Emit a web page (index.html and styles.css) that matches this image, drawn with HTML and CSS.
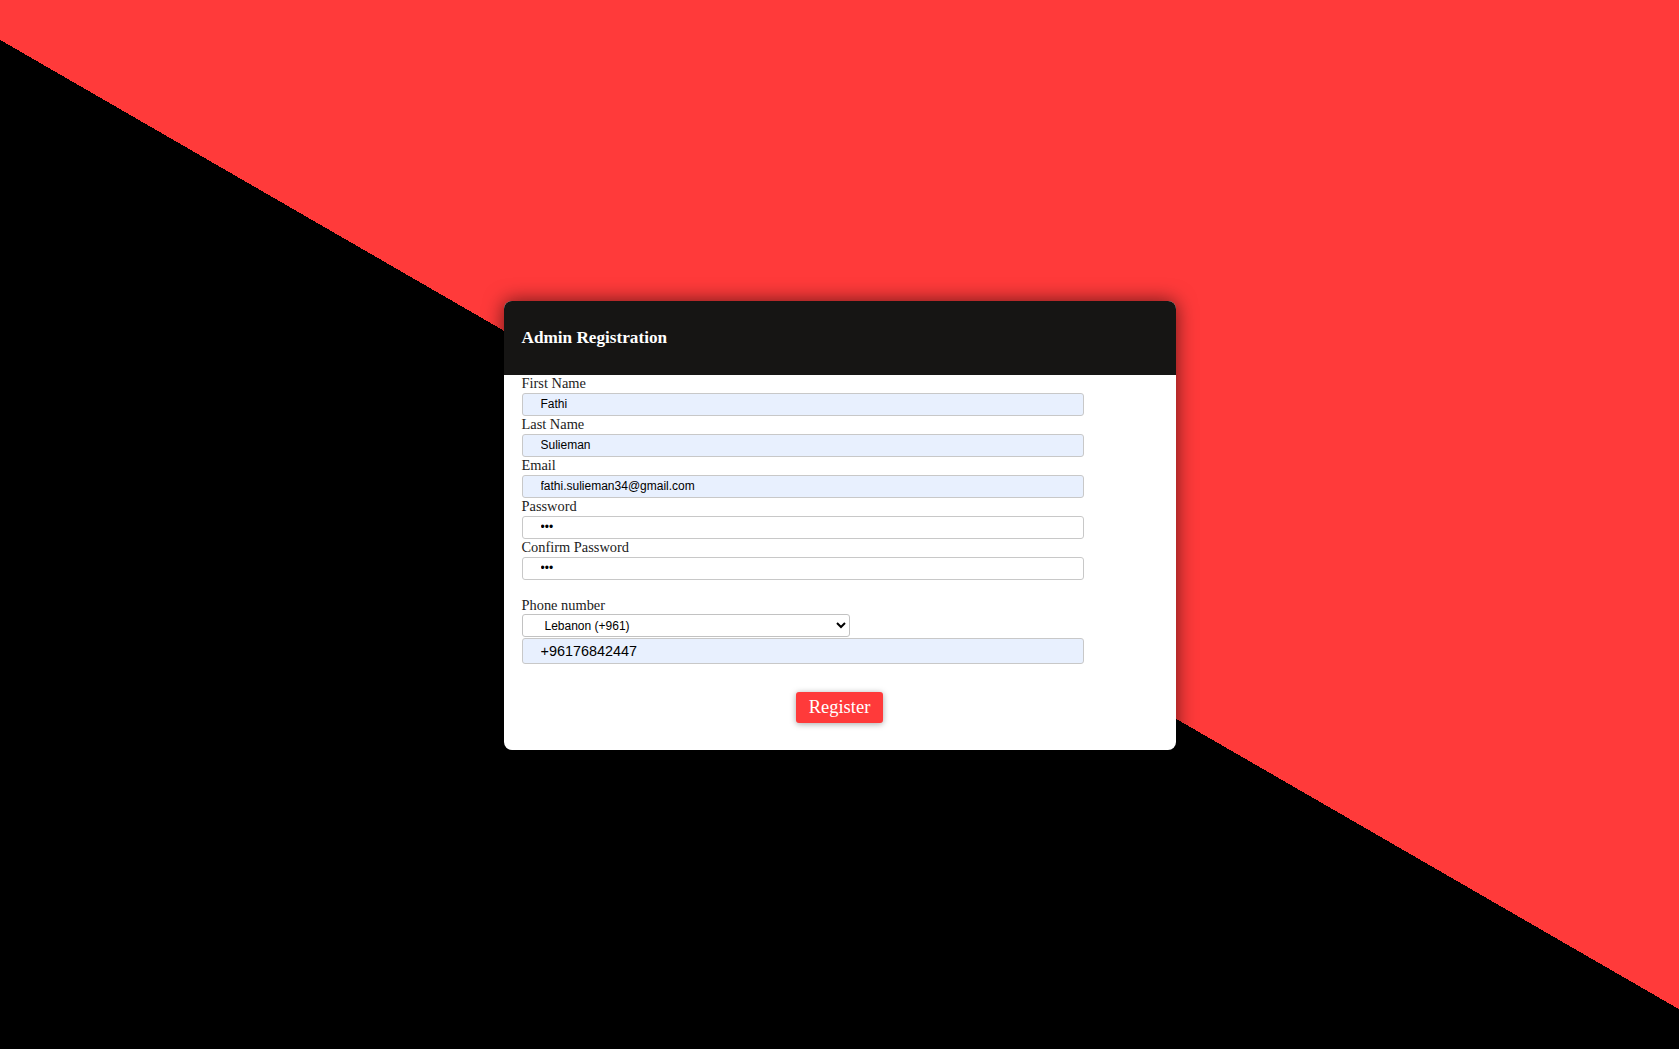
FILE: index.html
```html
<!DOCTYPE html>
<html lang="en">
<head>
<meta charset="utf-8">
<title>Admin Registration</title>
<link rel="stylesheet" href="styles.css">
</head>
<body>
<div class="page">
  <div class="card">
    <div class="card-header">
      <h3 class="title">Admin Registration</h3>
    </div>
    <form class="card-body">
      <label class="label">First Name</label>
      <input class="field filled" type="text" value="Fathi">
      <label class="label">Last Name</label>
      <input class="field filled" type="text" value="Sulieman">
      <label class="label">Email</label>
      <input class="field filled" type="email" value="fathi.sulieman34@gmail.com">
      <label class="label">Password</label>
      <input class="field" type="password" value="abc">
      <label class="label">Confirm Password</label>
      <input class="field" type="password" value="abc">
      <div class="phone">
        <label class="label">Phone number</label>
        <select class="country">
          <option>Lebanon (+961)</option>
        </select>
        <input class="field filled phone-input" type="tel" value="+96176842447">
      </div>
      <div class="actions">
        <button class="register" type="button">Register</button>
      </div>
    </form>
  </div>
</div>
</body>
</html>
```
FILE: styles.css
```css
html, body {
  margin: 0;
  height: 100%;
}

body {
  background: linear-gradient(30deg, #000 50%, #ff3a3a 50%);
  font-family: "Liberation Serif", "Times New Roman", serif;
}

.page {
  height: 100vh;
  box-sizing: border-box;
  padding-top: 2px;
  display: flex;
  align-items: center;
  justify-content: center;
}

.card {
  width: 672px;
  background: #fff;
  border-radius: 8px;
  overflow: hidden;
  box-shadow: 0 0 20px rgba(0, 0, 0, 0.6);
}

.card-header {
  height: 74px;
  box-sizing: border-box;
  background: #161514;
  display: flex;
  align-items: center;
  padding: 0 18px;
}

.title {
  margin: 0;
  color: #fff;
  font-size: 17.2px;
  font-weight: bold;
}

.card-body {
  padding: 0 18px 27.3px;
  margin: 0;
}

.label {
  display: block;
  font-size: 14.4px;
  line-height: 17.6px;
  color: #222;
}

.field {
  display: block;
  box-sizing: border-box;
  width: 562px;
  height: 23.4px;
  margin: 0;
  border: 1px solid #c8c8c8;
  border-radius: 3px;
  padding: 0 0 0 18px;
  font-family: "Liberation Sans", Arial, sans-serif;
  font-size: 12px;
  color: #000;
  background: #fff;
  outline: none;
}

.filled {
  background: #e8f0fe;
}

.phone {
  margin-top: 16.7px;
}

.country {
  display: block;
  box-sizing: border-box;
  width: 328px;
  height: 23px;
  margin: 0;
  border: 1px solid #c2c2c2;
  border-radius: 3px;
  padding: 0 4px 0 18px;
  background: #fff;
  color: #000;
  font-family: "Liberation Sans", Arial, sans-serif;
  font-size: 12px;
}

.phone-input {
  height: 26px;
  margin-top: 1px;
  font-size: 14.4px;
}

.actions {
  display: flex;
  justify-content: center;
  margin-top: 28px;
}

.register {
  height: 30.4px;
  padding: 0 13px;
  border: none;
  border-radius: 3px;
  background: #ff3a3a;
  color: #fff;
  font-family: "Liberation Serif", "Times New Roman", serif;
  font-size: 18.5px;
  box-shadow: 0 1px 6px rgba(0, 0, 0, 0.35);
}
```
